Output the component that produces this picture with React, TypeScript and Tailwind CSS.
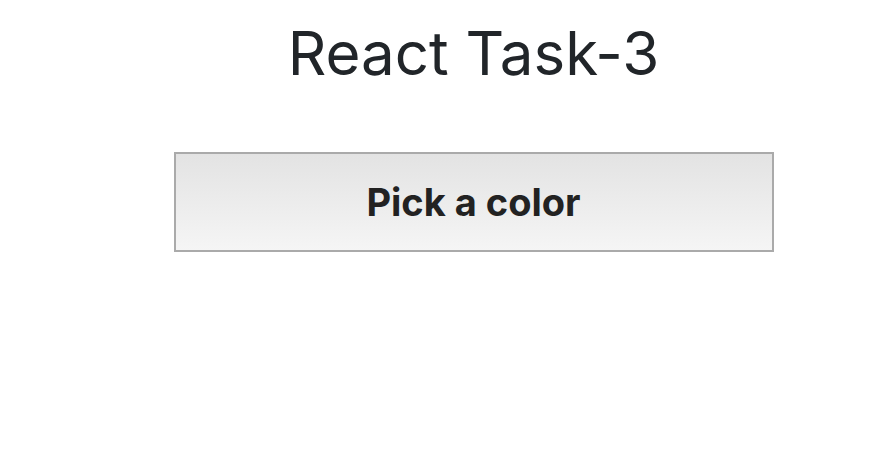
export default function App() {
  return (
    <div className="min-h-[474px] bg-white pl-[59px] font-['Inter',sans-serif] text-[#212529]">
      <div className="flex flex-col items-center">
        <h1 className="mt-[17px] text-[60px] leading-[72px] font-normal">React Task-3</h1>

        <button className="mt-[63px] flex h-[100px] w-[600px] items-center justify-center border-2 border-[#aaaaaa] bg-gradient-to-b from-[#e3e3e3] to-[#f5f5f5] text-[38px] font-bold text-[#222222]">
          Pick a color
        </button>
      </div>
    </div>
  )
}
